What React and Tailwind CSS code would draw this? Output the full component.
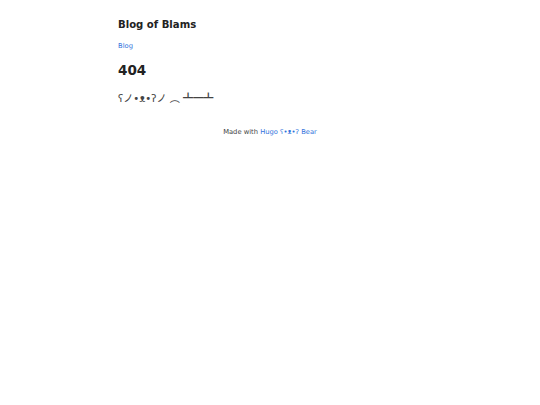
export default function App() {
  return (
    <div className="w-[540px] h-[405px] bg-white text-[#444] font-['DejaVu_Sans',Verdana,'Noto_Sans_CJK_JP',sans-serif]">
      <div className="w-[304px] mx-auto pt-[17px] flex flex-col">
        <div className="text-[10.1px] leading-[15.2px] font-bold text-[#222]">Blog of Blams</div>
        <div className="mt-[8.4px] text-[6.75px] leading-[10.1px] text-[#3273dc]">Blog</div>
        <div className="mt-[9px] text-[13.5px] leading-[20.25px] font-bold text-[#222]">404</div>
        <div className="mt-[10.1px] text-[10.1px] leading-[15.2px] whitespace-nowrap">
          ʕ<span className="font-['Noto_Sans_CJK_JP',sans-serif]">ノ</span>•ᴥ•ʔ<span className="font-['Noto_Sans_CJK_JP',sans-serif]">ノ</span> <span className="font-['Noto_Sans_CJK_JP',sans-serif]">︵</span> <span className="font-['Noto_Sans_CJK_JP',sans-serif]">┻━┻</span>
        </div>
        <div className="mt-[20.6px] text-center text-[6.75px] leading-[10.1px]">
          Made with <span className="text-[#3273dc]">Hugo ʕ•ᴥ•ʔ Bear</span>
        </div>
      </div>
    </div>
  );
}
